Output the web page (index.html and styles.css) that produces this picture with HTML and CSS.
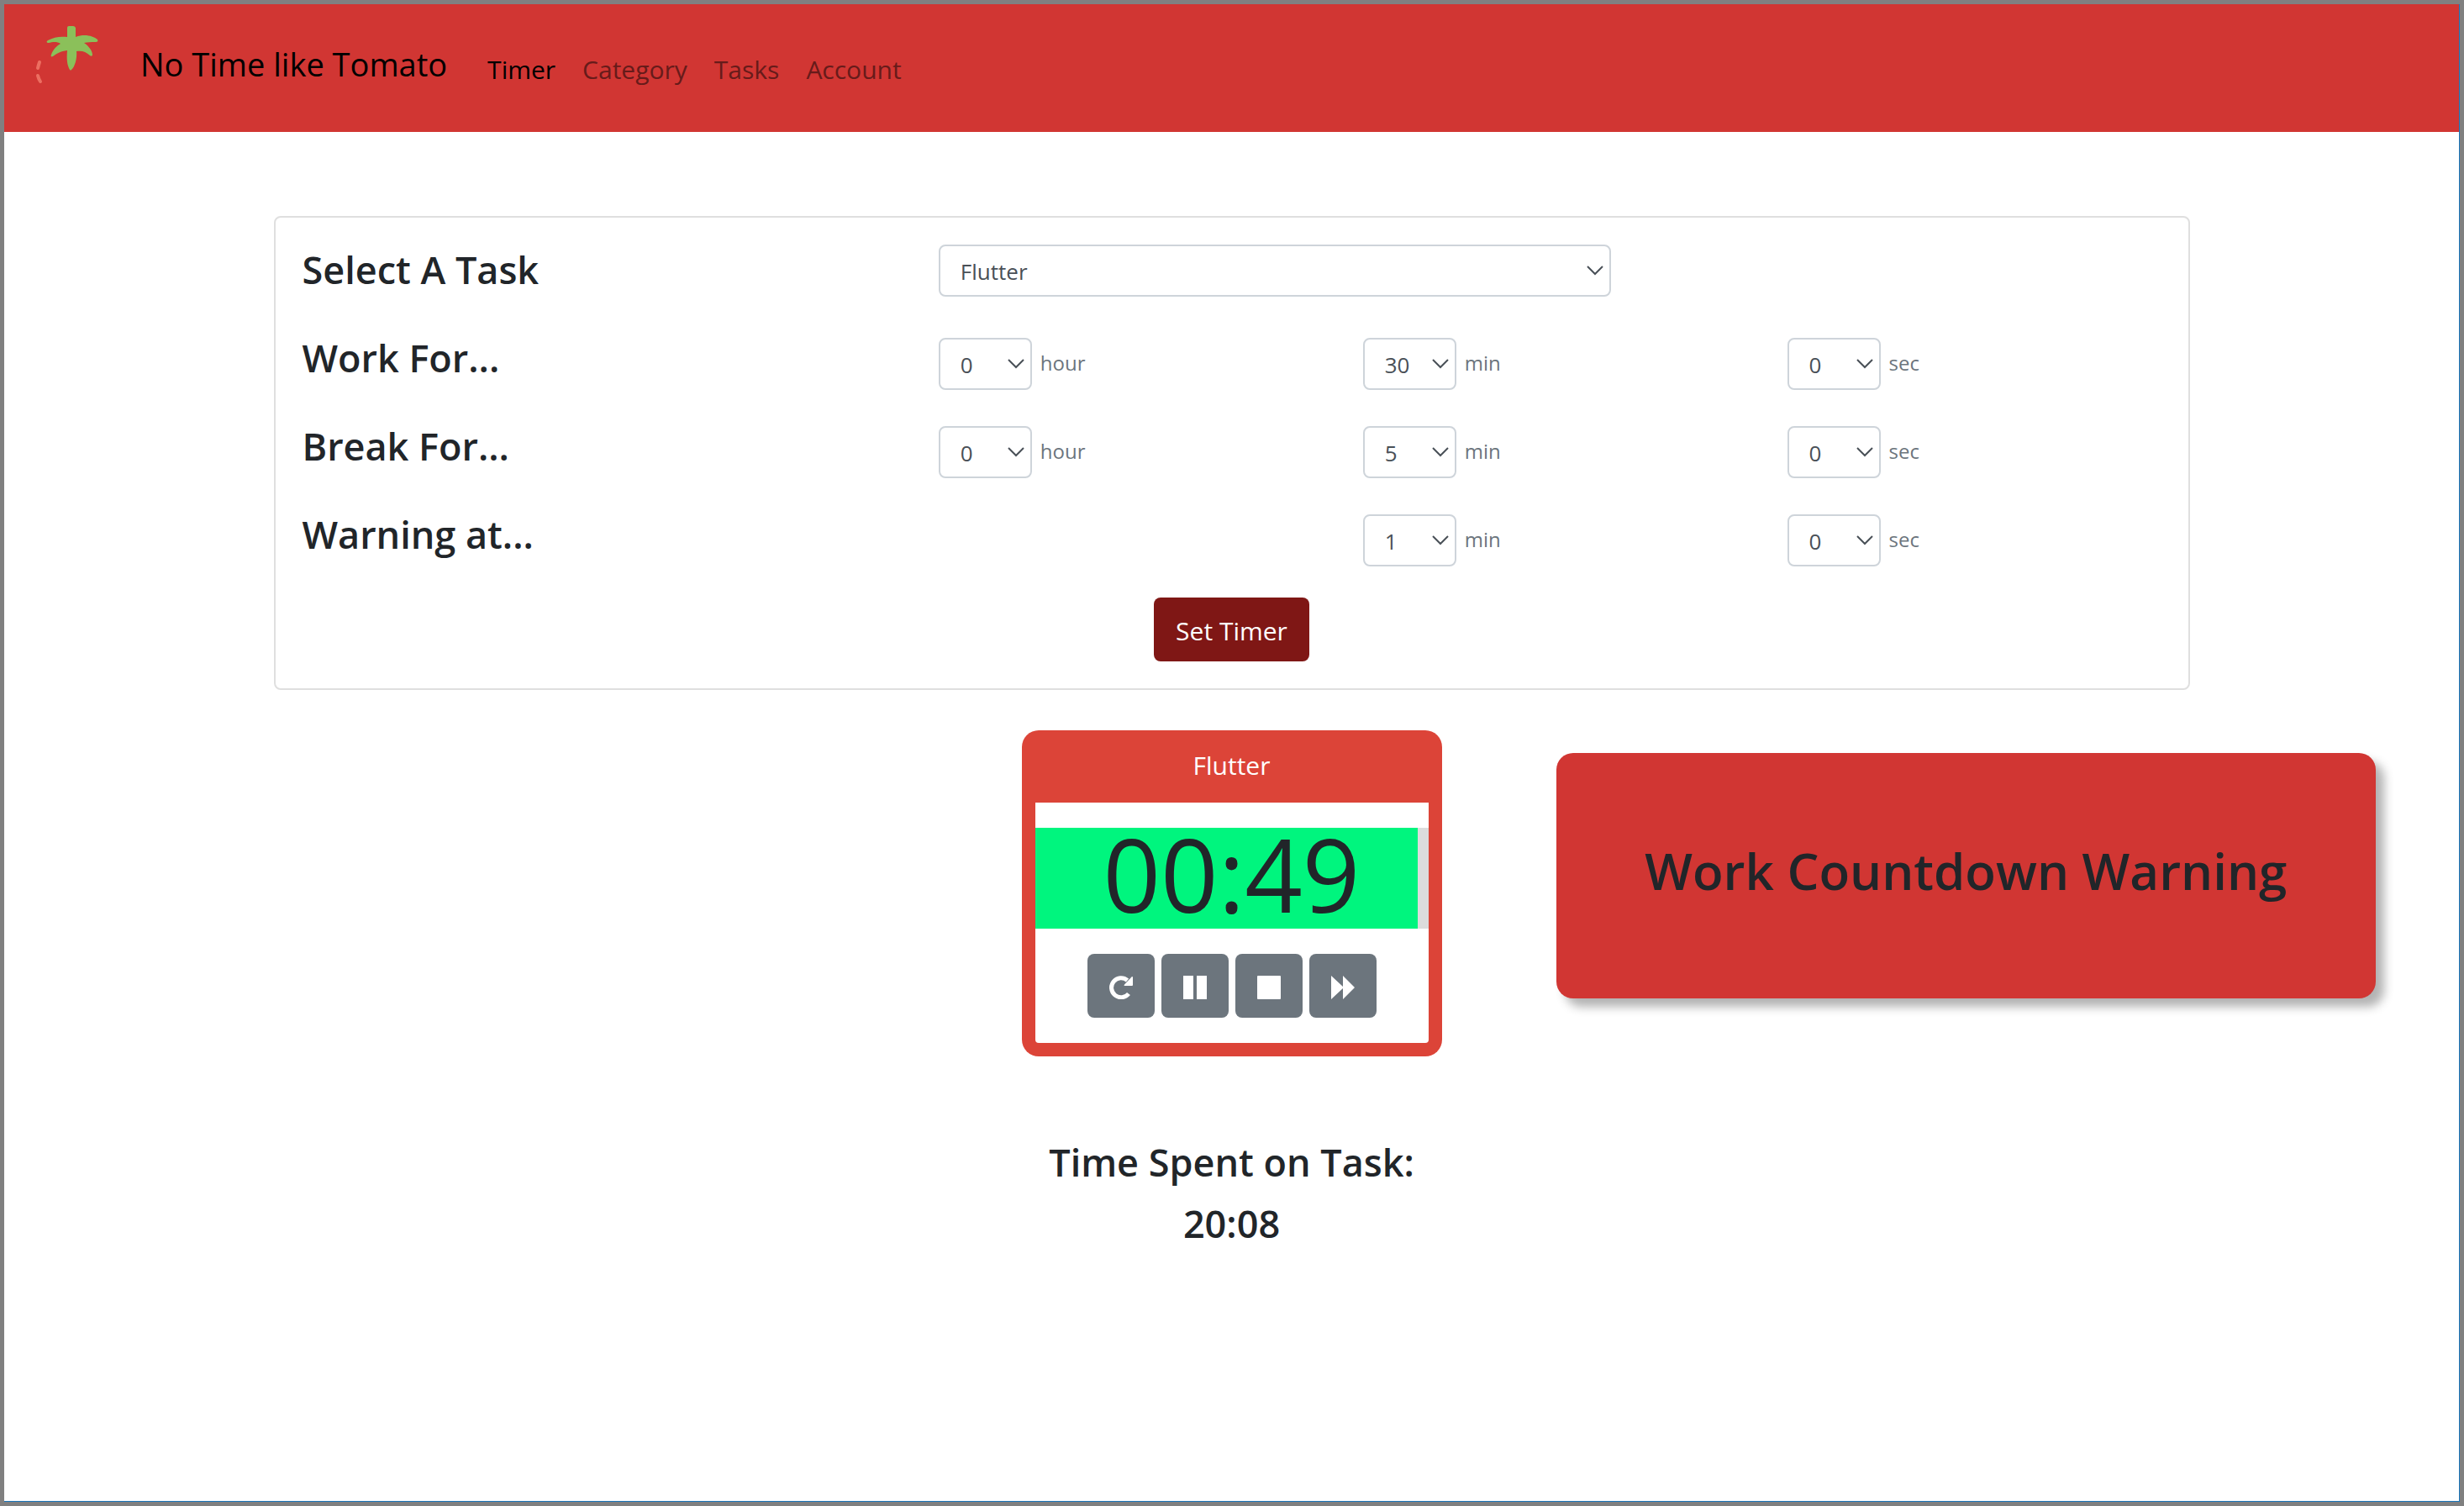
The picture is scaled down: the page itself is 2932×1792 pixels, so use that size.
FILE: index.html
```html
<!DOCTYPE html>
<html lang="en">
<head>
  <meta charset="utf-8">
  <meta name="viewport" content="width=device-width, initial-scale=1">
  <title>No Time like Tomato</title>
  <link rel="stylesheet" href="styles.css">
</head>
<body>
  <div class="window">
    <header class="navbar">
      <a class="brand" href="#">
        <svg class="brand-logo" viewBox="0 0 110 80" aria-hidden="true">
          <path fill="#8bc05a" d="M51 2 Q51 0 53 0 H58 Q60 0 61 2 V13 C72 9 82 12 87 16 C88 18 87 19 85 19 C79 19 75 19 71 20 C77 24 81 30 81 34 C81 36 79 36 78 35 C73 30 68 29 62 30 C63 38 60 49 56 52 Q55 53 54 52 C51 47 50 40 51 29 C43 30 38 33 34 36 C32 37 31 36 32 34 C34 28 39 23 43 21 C39 18 33 19 29 20 C26 20 26 18 28 17 C35 13 43 12 51 13 Z"/>
          <path fill="none" stroke="#ec6f61" stroke-width="4" stroke-linecap="round" d="M18 43 Q17 46 16 50 M16 59 Q17 63 19 66"/>
        </svg>
        <span>No Time like Tomato</span>
      </a>
      <nav class="nav-links" aria-label="Main">
        <a class="nav-link active" href="#" aria-current="page">Timer</a>
        <a class="nav-link" href="#">Category</a>
        <a class="nav-link" href="#">Tasks</a>
        <a class="nav-link" href="#">Account</a>
      </nav>
    </header>

    <main>
      <form class="settings">
        <label class="row-title" for="task">Select A Task</label>
        <div class="field field-wide">
          <select class="select select-task" id="task"><option>Flutter</option></select>
        </div>

        <h2 class="row-title">Work For...</h2>
        <div class="field">
          <select class="select" id="work-hour"><option>0</option></select>
          <label class="unit" for="work-hour">hour</label>
        </div>
        <div class="field">
          <select class="select" id="work-min"><option>30</option></select>
          <label class="unit" for="work-min">min</label>
        </div>
        <div class="field">
          <select class="select" id="work-sec"><option>0</option></select>
          <label class="unit" for="work-sec">sec</label>
        </div>

        <h2 class="row-title">Break For...</h2>
        <div class="field">
          <select class="select" id="break-hour"><option>0</option></select>
          <label class="unit" for="break-hour">hour</label>
        </div>
        <div class="field">
          <select class="select" id="break-min"><option>5</option></select>
          <label class="unit" for="break-min">min</label>
        </div>
        <div class="field">
          <select class="select" id="break-sec"><option>0</option></select>
          <label class="unit" for="break-sec">sec</label>
        </div>

        <h2 class="row-title">Warning at...</h2>
        <div class="field field-after-gap">
          <select class="select" id="warn-min"><option>1</option></select>
          <label class="unit" for="warn-min">min</label>
        </div>
        <div class="field">
          <select class="select" id="warn-sec"><option>0</option></select>
          <label class="unit" for="warn-sec">sec</label>
        </div>

        <button class="btn btn-set" type="button">Set Timer</button>
      </form>

      <div class="stage">
        <section class="timer" aria-label="Timer">
          <h2 class="timer-title">Flutter</h2>
          <div class="timer-body">
            <div class="progress">
              <div class="progress-fill" style="width: 97.3%"></div>
              <div class="clock">00:49</div>
            </div>
            <div class="controls">
              <button class="btn btn-control" type="button" aria-label="Restart">
                <svg class="icon" viewBox="0 0 28 28" aria-hidden="true"><path fill="none" stroke="#fff" stroke-width="5" d="M23 21.500 A11.500 11.500 0 1 1 21.500 5.500"/><path fill="#fff" d="M27 1 Q28 1 28 2 V11 Q28 12 27 12 H18 Q17 12 18 10.500 Z"/></svg>
              </button>
              <button class="btn btn-control" type="button" aria-label="Pause">
                <svg class="icon" viewBox="0 0 28 28" aria-hidden="true"><path fill="#fff" d="M0 0H12V28H0ZM16 0H28V28H16Z"/></svg>
              </button>
              <button class="btn btn-control" type="button" aria-label="Stop">
                <svg class="icon" viewBox="0 0 28 28" aria-hidden="true"><rect fill="#fff" width="28" height="28" rx="1"/></svg>
              </button>
              <button class="btn btn-control" type="button" aria-label="Skip">
                <svg class="icon" viewBox="0 0 28 28" aria-hidden="true"><path fill="#fff" d="M0 0L14 13V0L28 14L14 28V15L0 28Z"/></svg>
              </button>
            </div>
          </div>
        </section>

        <div class="toast" role="alert"><h2 class="toast-title">Work Countdown Warning</h2></div>
      </div>

      <section class="summary">
        <h2 class="summary-line">Time Spent on Task:</h2>
        <p class="summary-line">20:08</p>
      </section>
    </main>
  </div>
</body>
</html>
```

FILE: styles.css
```css
* {
  box-sizing: border-box;
}

body {
  margin: 0;
  border: 5px solid #808080;
  background: #fff;
  color: #212529;
  font: 400 30px/48px "Open Sans", "Noto Sans", sans-serif;
}

.window {
  min-height: calc(100vh - 10px);
  border: solid #1a75bb;
  border-width: 0 1px 1px 0;
}

h2,
p {
  margin: 0;
}

/* Navigation bar */
.navbar {
  display: flex;
  align-items: flex-start;
  gap: 48px;
  padding: 26px 24px 46px;
  background: #d13633;
}

.brand {
  display: flex;
  gap: 28px;
  height: 80px;
  color: #000;
  font-size: 38px;
  line-height: 90px;
  text-decoration: none;
}

.brand-logo {
  width: 110px;
  height: 80px;
}

.nav-links {
  display: flex;
  gap: 32px;
  padding-top: 28px;
}

.nav-link {
  color: #671b1a;
  text-decoration: none;
}

.nav-link.active {
  color: #000;
}

/* Timer settings */
.settings {
  display: grid;
  grid-template-columns: 3fr 2fr 2fr 2fr;
  grid-template-rows: repeat(4, 105px) 76px;
  max-width: 2280px;
  margin: 100px auto 0;
  padding: 32px 2px;
  border: 2px solid #dfdfdf;
  border-radius: 8px;
}

.row-title,
.summary-line {
  font-size: 45px;
  font-weight: 600;
  line-height: 60px;
}

.row-title {
  padding: 0 30px;
}

.field {
  display: flex;
  align-items: center;
  align-self: start;
  gap: 10px;
  padding: 6px 30px 0;
}

.field-wide {
  grid-column: span 3;
  padding-top: 0;
}

.field-after-gap {
  grid-column: 3;
}

.select {
  width: 111px;
  height: 62px;
  padding: 2px 36px 0 24px;
  border: 2px solid #ced4da;
  border-radius: 8px;
  background: #fff url("data:image/svg+xml,%3Csvg xmlns='http://www.w3.org/2000/svg' viewBox='0 0 20 12'%3E%3Cpath fill='none' stroke='%23495057' stroke-width='2' d='M1 1l9 9 9-9'/%3E%3C/svg%3E") no-repeat right 7px center / 20px 12px;
  color: #495057;
  font: inherit;
  font-size: 26px;
  appearance: none;
}

.select-task {
  width: 100%;
  max-width: 800px;
}

.unit {
  padding-bottom: 2px;
  color: #6c757d;
  font-size: 24px;
}

.btn {
  height: 76px;
  border: 0;
  border-radius: 8px;
  color: #fff;
  font: inherit;
}

.btn-set {
  grid-column: 1 / -1;
  justify-self: center;
  padding: 3px 26px 0;
  background: #7f1715;
}

/* Running timer and its warning */
.stage {
  display: grid;
  grid-template-columns: 1fr 500px 1fr;
  align-items: start;
  margin-top: 48px;
}

.timer {
  grid-column: 2;
  padding: 0 16px 16px;
  border-radius: 20px;
  background: #dc4438;
}

.timer-title {
  padding: 18px 0 20px;
  color: #fff;
  font-size: 30px;
  font-weight: 400;
  line-height: 48px;
  text-align: center;
}

.timer-body {
  padding: 30px 0;
  border-radius: 0 0 4px 4px;
  background: #fff;
}

.progress {
  display: grid;
  height: 120px;
  background: #dcdcdc;
}

.progress-fill,
.clock {
  grid-area: 1 / 1;
}

.progress-fill {
  background: #00f57e;
}

.clock {
  font-size: 120px;
  line-height: 110px;
  text-align: center;
}

.controls {
  display: flex;
  justify-content: center;
  gap: 8px;
  margin-top: 30px;
}

.btn-control {
  display: flex;
  align-items: center;
  justify-content: center;
  width: 80px;
  padding: 4px 0 0;
  background: #6c757d;
}

.icon {
  width: 28px;
  height: 28px;
}

.toast {
  margin: 27px 99px 0 136px;
  padding: 100px 24px 112px;
  border-radius: 20px;
  background: #d13633;
  box-shadow: 10px 10px 12px rgba(0, 0, 0, 0.3);
}

.toast-title {
  font-size: 60px;
  font-weight: 600;
  line-height: 80px;
  text-align: center;
}

/* Total time */
.summary {
  display: grid;
  gap: 13px;
  margin-top: 96px;
  text-align: center;
}
```
